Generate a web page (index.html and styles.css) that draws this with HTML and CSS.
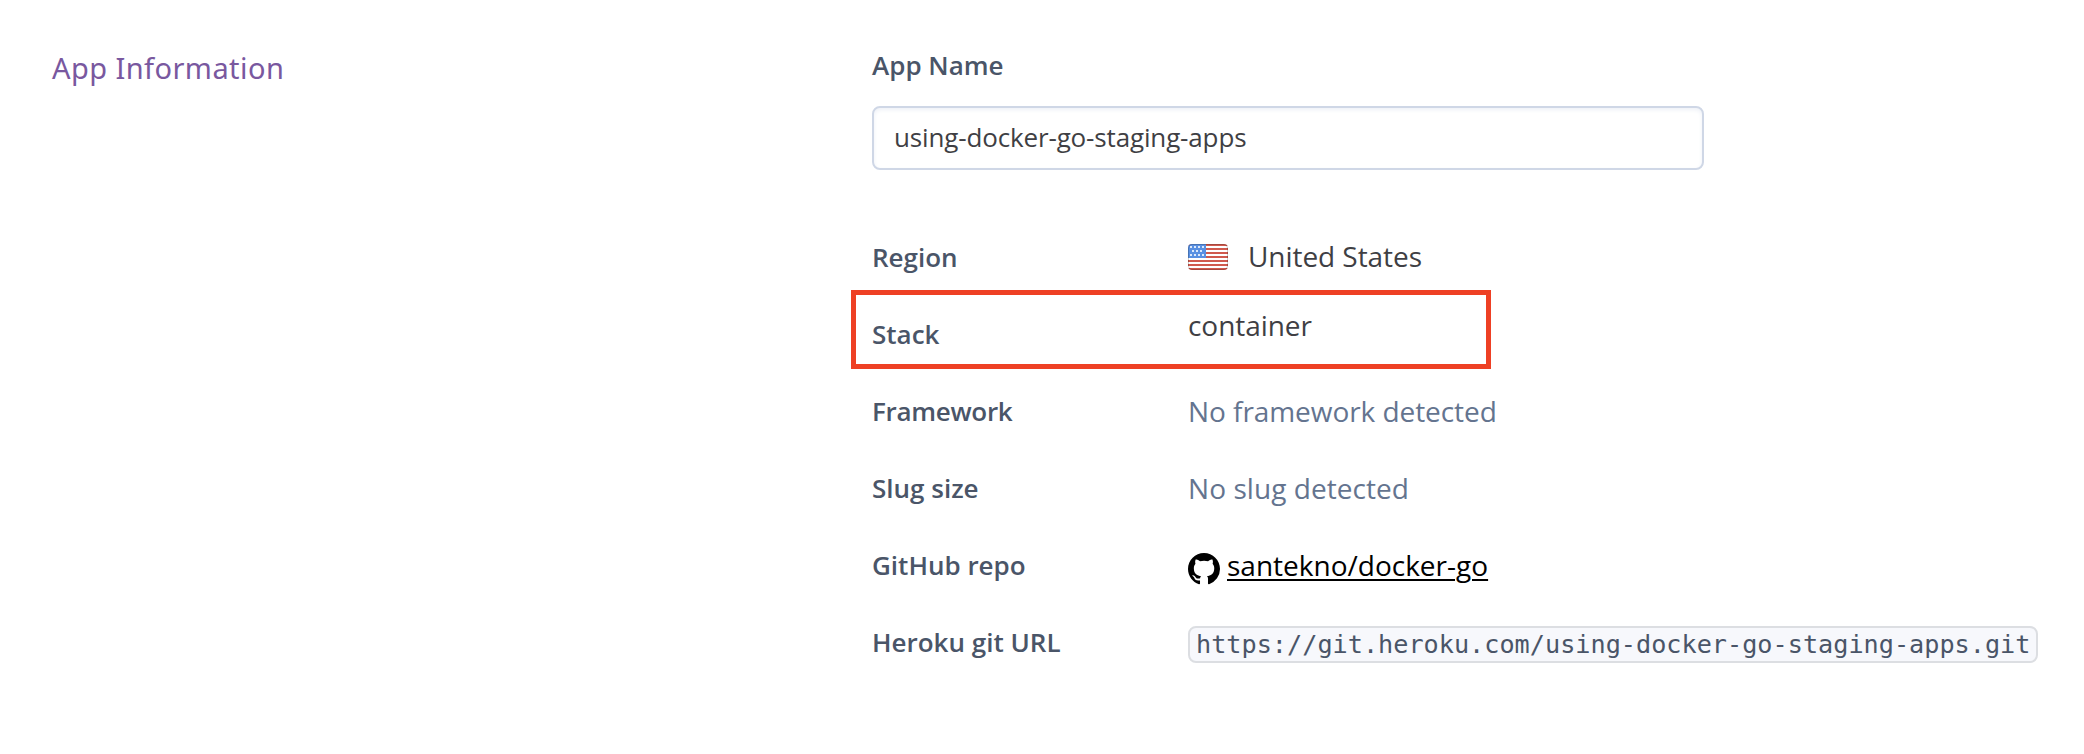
FILE: index.html
```html
<!DOCTYPE html>
<html lang="en">
<head>
<meta charset="utf-8">
<title>App Information</title>
<link rel="stylesheet" href="styles.css">
</head>
<body>
<main class="settings">
  <h2 class="section-title">App Information</h2>
  <section class="details">
    <label class="name-label" for="app-name">App Name</label>
    <input class="name-input" id="app-name" type="text" value="using-docker-go-staging-apps" spellcheck="false">
    <dl class="rows">
      <div class="row"><dt>Region</dt>
        <dd class="region">
          <svg class="flag" viewBox="0 0 40 26">
            <defs><clipPath id="flag-shape"><rect width="40" height="26" rx="4"/></clipPath></defs>
            <g clip-path="url(#flag-shape)">
              <rect width="40" height="26" fill="#fff"/>
              <path d="M0 1h40M0 5h40M0 9h40M0 13h40M0 17h40M0 21h40M0 25h40" stroke="#d05a4e" stroke-width="2"/>
              <rect width="18" height="14" fill="#5990e2"/>
              <path d="M2 3h14M2 11h14" stroke="#dce9fa" stroke-width="2" stroke-dasharray="2 2"/>
              <path d="M4 7h11" stroke="#dce9fa" stroke-width="2" stroke-dasharray="2 2"/>
            </g>
            <rect x=".5" y=".5" width="39" height="25" rx="3.5" fill="none" stroke="#000" stroke-opacity=".2"/>
          </svg>
          <span>United States</span>
        </dd></div>
      <div class="row stack"><dt>Stack</dt><dd>container</dd></div>
      <div class="row"><dt class="tight">Framework</dt><dd class="muted">No framework detected</dd></div>
      <div class="row"><dt>Slug size</dt><dd class="muted slug">No slug detected</dd></div>
      <div class="row"><dt>GitHub repo</dt>
        <dd class="repo">
          <svg class="mark" viewBox="0 0 16 16"><path fill-rule="evenodd" d="M8 0C3.58 0 0 3.58 0 8c0 3.54 2.29 6.53 5.47 7.59.4.07.55-.17.55-.38 0-.19-.01-.82-.01-1.49-2.01.37-2.53-.49-2.69-.94-.09-.23-.48-.94-.82-1.13-.28-.15-.68-.52-.01-.53.63-.01 1.08.58 1.23.82.72 1.21 1.87.87 2.33.66.07-.52.28-.87.51-1.07-1.78-.2-3.64-.89-3.64-3.95 0-.87.31-1.59.82-2.15-.08-.2-.36-1.02.08-2.12 0 0 .67-.21 2.2.82.64-.18 1.32-.27 2-.27s1.36.09 2 .27c1.53-1.04 2.2-.82 2.2-.82.44 1.1.16 1.92.08 2.12.51.56.82 1.27.82 2.15 0 3.07-1.87 3.75-3.65 3.95.29.25.54.73.54 1.48 0 1.07-.01 1.93-.01 2.2 0 .21.15.46.55.38A8.01 8.01 0 0 0 16 8c0-4.42-3.58-8-8-8z"/></svg>
          <a href="#">santekno/docker-go</a>
        </dd></div>
      <div class="row"><dt>Heroku git URL</dt><dd><code>https://git.heroku.com/using-docker-go-staging-apps.git</code></dd></div>
    </dl>
  </section>
</main>
</body>
</html>
```
FILE: styles.css
```css
body { margin: 0; background: #fff; font-family: "Open Sans", sans-serif; color: #3f3f44; overflow: hidden; }
.settings { display: grid; grid-template-columns: 820px 1fr; padding: 45px 0 0 52px; }
.section-title { margin: 0; font: 400 29px/46px "Noto Sans", sans-serif; letter-spacing: .43px; color: #79589f; }
.details { display: flex; flex-direction: column; }
.name-label { font-size: 26px; line-height: 40px; font-weight: 600; color: #4a5568; }
.name-input { box-sizing: border-box; width: 832px; height: 64px; margin-top: 21px; padding: 0 20px 2px; border: 2px solid #cfd7e6; border-radius: 8px; box-shadow: inset 0 2px 4px #eef1f7; background: #fff; color: #3f3f44; font: 26px "Open Sans", sans-serif; letter-spacing: -.15px; outline: 0; }
.rows { margin: 49px 0 0; }
.row { position: relative; display: grid; grid-template-columns: 316px 1fr; height: 77px; line-height: 77px; }
dt { font-size: 26px; font-weight: 600; color: #4a5568; }
.tight { letter-spacing: -.3px; }
dd { margin: 0; font-size: 28px; letter-spacing: -.06px; white-space: nowrap; }
.muted { color: #64748f; }
.slug { letter-spacing: .06px; }
.region, .repo { display: flex; align-items: center; }
.region span { margin-bottom: 3px; line-height: 40px; }
.flag { width: 40px; height: 26px; margin: 0 20px 1px 0; }
.mark { width: 32px; height: 32px; margin: 6px 7px 0 0; }
.stack dd { line-height: 58px; }
.stack::after { content: ""; position: absolute; left: -21px; top: -6px; box-sizing: border-box; width: 640px; height: 79px; border: 5px solid #ee4024; }
a { color: #000; letter-spacing: 0; text-decoration: underline; text-decoration-thickness: 2px; text-underline-offset: 3px; }
code { display: inline-block; padding: 0 5.2px 0 6px; border: 2px solid #dcdee2; border-radius: 8px; background: #f7f8fc; color: #4a5568; font: 25.2px/33px "DejaVu Sans Mono", monospace; letter-spacing: .008px; }
```
